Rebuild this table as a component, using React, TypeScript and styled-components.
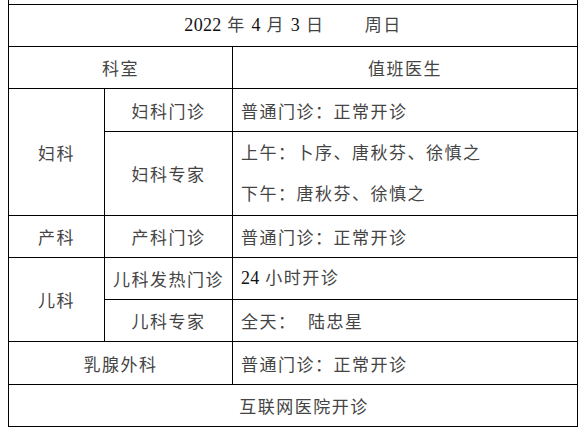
import React from "react";
import styled, { createGlobalStyle } from "styled-components";

const GlobalStyle = createGlobalStyle`
  html, body {
    margin: 0;
    padding: 0;
    background: #fff;
  }
  body {
    font-family: "Liberation Serif", "Noto Sans CJK SC", serif;
  }
`;

const Page = styled.div`
  padding-left: 8px;
`;

const Table = styled.div`
  display: grid;
  grid-template-columns: 96px 128px 345px;
  grid-template-rows: 5px 42px 42px 43px 84px 42px 42px 42px 43px 42px;
  width: 570px;
  box-sizing: border-box;
  border-left: 1px solid #000;
`;

const Cell = styled.div<{ $col: string; $row: string; $left?: boolean; $shift?: number }>`
  grid-column: ${(p) => p.$col};
  grid-row: ${(p) => p.$row};
  box-sizing: border-box;
  border-right: 1px solid #000;
  border-bottom: 1px solid #000;
  display: flex;
  flex-direction: column;
  justify-content: center;
  align-items: ${(p) => (p.$left ? "flex-start" : "center")};
  padding: 0 ${(p) => (p.$left ? "0" : "4px")} 0 ${(p) => (p.$left ? 8 : 4 + (p.$shift ?? 0))}px;
  font-size: 17px;
  letter-spacing: 1.5px;
  color: #444;
  white-space: pre;
  overflow: hidden;
`;

const Line = styled.div`
  line-height: 41px;
`;

const Num = styled.span`
  color: #111;
  font-size: 18px;
  letter-spacing: 0.3px;
`;

const sp = (n: number) => "\u00a0".repeat(n);

export default function App() {
  return (
    <Page>
      <GlobalStyle />
      <Table>
        <Cell $col="1 / 4" $row="1" />

        <Cell $col="1 / 4" $row="2">
          <Line>
            <Num>2022</Num> 年 <Num>4</Num> 月 <Num>3</Num> 日{sp(7)}周日
          </Line>
        </Cell>

        <Cell $col="1 / 3" $row="3">科室</Cell>
        <Cell $col="3" $row="3">值班医生</Cell>

        <Cell $col="1" $row="4 / 6">妇科</Cell>
        <Cell $col="2" $row="4">妇科门诊</Cell>
        <Cell $col="3" $row="4" $left>普通门诊：正常开诊</Cell>
        <Cell $col="2" $row="5">妇科专家</Cell>
        <Cell $col="3" $row="5" $left>
          <Line>上午：卜序、唐秋芬、徐慎之</Line>
          <Line>下午：唐秋芬、徐慎之</Line>
        </Cell>

        <Cell $col="1" $row="6">产科</Cell>
        <Cell $col="2" $row="6">产科门诊</Cell>
        <Cell $col="3" $row="6" $left>普通门诊：正常开诊</Cell>

        <Cell $col="1" $row="7 / 9">儿科</Cell>
        <Cell $col="2" $row="7">儿科发热门诊</Cell>
        <Cell $col="3" $row="7" $left>
          <Line>
            <Num>24</Num> 小时开诊
          </Line>
        </Cell>
        <Cell $col="2" $row="8">儿科专家</Cell>
        <Cell $col="3" $row="8" $left>全天：{sp(2)}陆忠星</Cell>

        <Cell $col="1 / 3" $row="9">乳腺外科</Cell>
        <Cell $col="3" $row="9" $left>普通门诊：正常开诊</Cell>

        <Cell $col="1 / 4" $row="10" $shift={22}>互联网医院开诊</Cell>
      </Table>
    </Page>
  );
}
